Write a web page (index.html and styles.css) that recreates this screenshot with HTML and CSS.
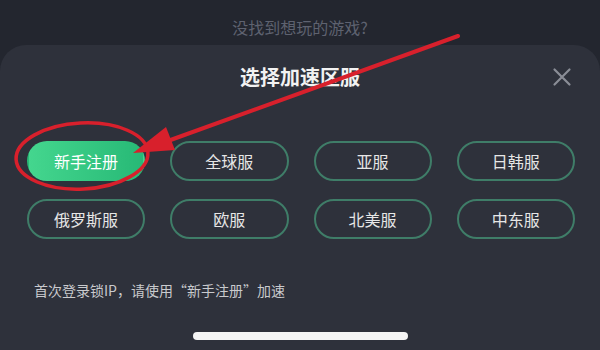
FILE: index.html
```html
<!DOCTYPE html>
<html lang="zh-CN">
<head>
    <meta charset="UTF-8">
    <meta name="viewport" content="width=device-width, initial-scale=1.0">
    <title>选择加速区服</title>
    <link rel="stylesheet" href="styles.css">
</head>
<body>
    <div class="page">
        <div class="top-tip">没找到想玩的游戏?</div>

        <!-- 区服选择弹层 -->
        <div class="sheet">
            <div class="sheet-header">
                <h2>选择加速区服</h2>
                <span class="close-btn">
                    <svg width="20" height="20" viewBox="0 0 20 20">
                        <path d="M2.5 2.5 L17.5 17.5 M17.5 2.5 L2.5 17.5" stroke="#8a8d96" stroke-width="2.2" stroke-linecap="round"/>
                    </svg>
                </span>
            </div>

            <div class="server-grid">
                <button class="server-btn active">新手注册</button>
                <button class="server-btn">全球服</button>
                <button class="server-btn">亚服</button>
                <button class="server-btn">日韩服</button>
                <button class="server-btn">俄罗斯服</button>
                <button class="server-btn">欧服</button>
                <button class="server-btn">北美服</button>
                <button class="server-btn">中东服</button>
            </div>

            <p class="note">首次登录锁IP，请使用“新手注册”加速</p>

            <div class="home-bar"></div>
        </div>

        <!-- 红色标注 -->
        <svg class="mark" width="600" height="350" viewBox="0 0 600 350">
            <ellipse cx="82" cy="156" rx="66" ry="33" fill="none" stroke="#d8202c" stroke-width="3.5" transform="rotate(-3 82 156)"/>
            <line x1="458" y1="36" x2="165" y2="142" stroke="#d8202c" stroke-width="4" stroke-linecap="round"/>
            <polygon points="133,153 166,127 175,150" fill="#d8202c"/>
        </svg>
    </div>
</body>
</html>
```

FILE: styles.css
```css
body {
    margin: 0;
    background-color: #23262f;
    font-family: "Noto Sans CJK SC", "Noto Sans", sans-serif;
}

.page {
    position: relative;
    width: 600px;
    height: 350px;
    overflow: hidden;
}

.top-tip {
    height: 45px;
    padding-top: 15px;
    box-sizing: border-box;
    text-align: center;
    font-size: 16px;
    line-height: 24px;
    color: #5e6270;
}

.sheet {
    height: 305px;
    background-color: #2e313b;
    border-radius: 26px 26px 0 0;
    display: flex;
    flex-direction: column;
}

.sheet-header {
    display: flex;
    align-items: center;
    justify-content: center;
    height: 63px;
    position: relative;
}

.sheet-header h2 {
    margin: 0;
    font-size: 20px;
    font-weight: bold;
    color: #f2f2f2;
}

.close-btn {
    position: absolute;
    right: 28px;
    top: 22px;
    display: flex;
}

.server-grid {
    display: grid;
    grid-template-columns: repeat(4, 1fr);
    column-gap: 25px;
    row-gap: 18px;
    padding: 33px 25px 0 27px;
}

.server-btn {
    height: 40px;
    border: 2px solid #3f7d68;
    border-radius: 20px;
    background: transparent;
    color: #e6e6e6;
    font-family: inherit;
    font-size: 16px;
    padding: 0;
}

.server-btn.active {
    border-color: transparent;
    background: linear-gradient(90deg, #44d68e, #27b976);
    color: #ffffff;
}

.note {
    margin: 41px 0 0 34px;
    font-size: 14px;
    line-height: 20px;
    color: #c9cacd;
}

.home-bar {
    width: 215px;
    height: 8px;
    margin: 32px auto 0;
    border-radius: 4px;
    background-color: #f5f5f5;
}

.mark {
    position: absolute;
    left: 0;
    top: 0;
}
```
